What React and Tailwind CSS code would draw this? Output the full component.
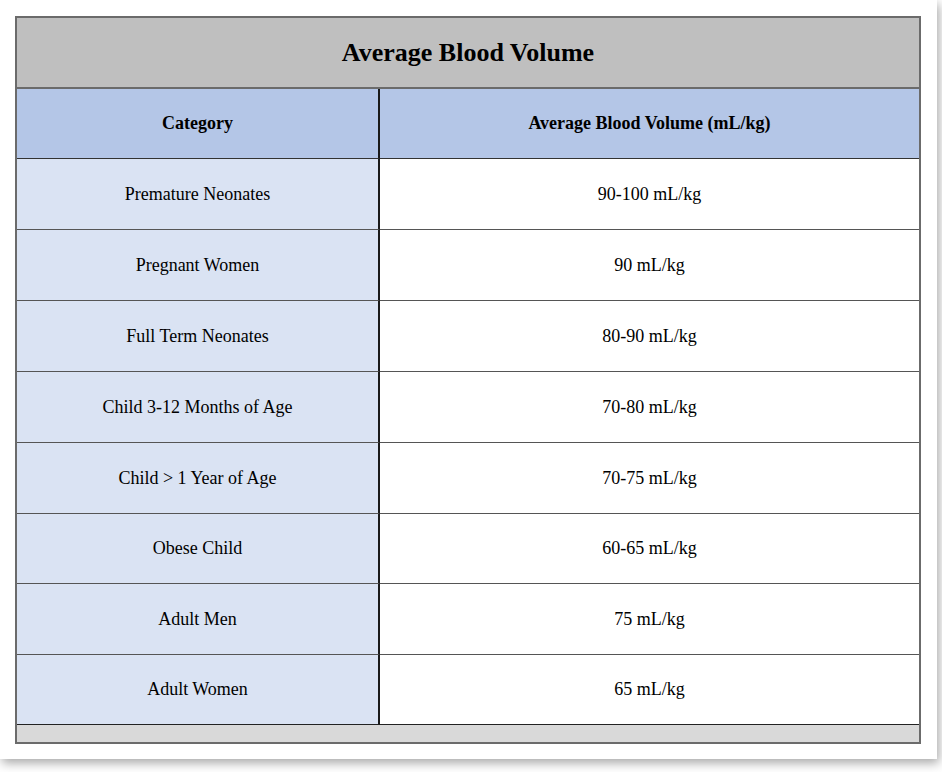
import React from "react";

const rows = [
  ["Premature Neonates", "90-100 mL/kg", "h-[71px]"],
  ["Pregnant Women", "90 mL/kg", "h-[71px]"],
  ["Full Term Neonates", "80-90 mL/kg", "h-[71px]"],
  ["Child 3-12 Months of Age", "70-80 mL/kg", "h-[71px]"],
  ["Child > 1 Year of Age", "70-75 mL/kg", "h-[71px]"],
  ["Obese Child", "60-65 mL/kg", "h-[70px]"],
  ["Adult Men", "75 mL/kg", "h-[71px]"],
  ["Adult Women", "65 mL/kg", "h-[70px]"],
];

export default function App() {
  return (
    <div className="w-[942px] h-[772px] bg-white overflow-hidden" style={{ fontFamily: '"Liberation Serif", "Times New Roman", serif' }}>
      <div className="w-[937px] h-[759px] bg-white shadow-[2px_4px_10px_rgba(0,0,0,0.35)] pt-[16px] pl-[15px]">
        <div className="w-[906px] border-2 border-[#6b6b6b] text-black">
          <div className="h-[71px] bg-[#bfbfbf] flex items-center justify-center text-[26px] font-bold border-b-2 border-[#6b6b6b]">
            Average Blood Volume
          </div>
          <div className="grid grid-cols-[363px_1fr]">
            <div className="h-[70px] bg-[#b4c6e7] border-r-2 border-[#1a1a1a] border-b border-b-[#333] flex items-center justify-center text-[18px] font-bold">
              Category
            </div>
            <div className="h-[70px] bg-[#b4c6e7] border-b border-[#333] flex items-center justify-center text-[18px] font-bold">
              Average Blood Volume (mL/kg)
            </div>
            {rows.map(([a, b, h], i) => (
              <React.Fragment key={i}>
                <div className={`${h} bg-[#dae3f3] border-r-2 border-[#1a1a1a] flex items-center justify-center text-[18px] ${i < rows.length - 1 ? "border-b border-b-[#555]" : "border-b border-b-[#222]"}`}>
                  {a}
                </div>
                <div className={`${h} bg-white flex items-center justify-center text-[18px] ${i < rows.length - 1 ? "border-b border-[#555]" : "border-b border-[#222]"}`}>
                  {b}
                </div>
              </React.Fragment>
            ))}
          </div>
          <div className="h-[17px] bg-[#d9d9d9]"></div>
        </div>
      </div>
    </div>
  );
}
